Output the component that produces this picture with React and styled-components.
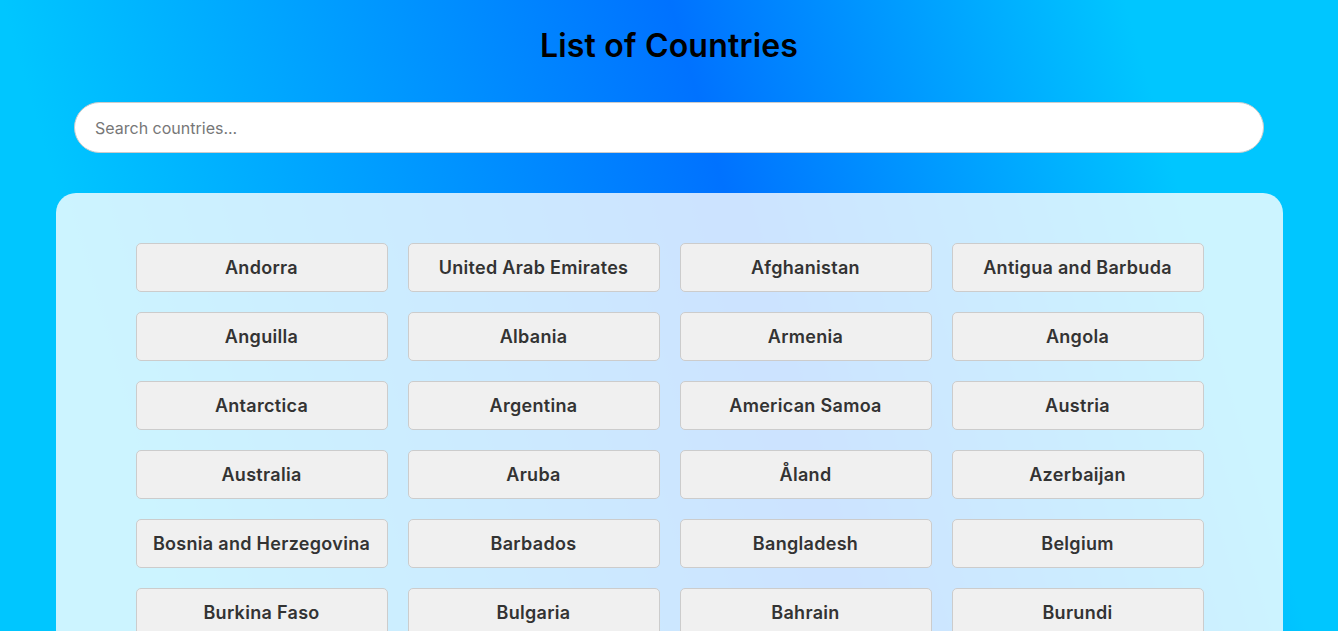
import React, { useState } from 'react'
import styled, { createGlobalStyle } from 'styled-components'

const countries = [
  'Andorra', 'United Arab Emirates', 'Afghanistan', 'Antigua and Barbuda',
  'Anguilla', 'Albania', 'Armenia', 'Angola',
  'Antarctica', 'Argentina', 'American Samoa', 'Austria',
  'Australia', 'Aruba', 'Åland', 'Azerbaijan',
  'Bosnia and Herzegovina', 'Barbados', 'Bangladesh', 'Belgium',
  'Burkina Faso', 'Bulgaria', 'Bahrain', 'Burundi',
  'Benin', 'Saint Barthélemy', 'Bermuda', 'Brunei',
  'Bolivia', 'Bonaire', 'Brazil', 'Bahamas'
]

const GlobalStyle = createGlobalStyle`
  html, body {
    margin: 0;
    padding: 0;
  }
  body {
    font-family: Inter, "Noto Sans", sans-serif;
    background: linear-gradient(74deg, #00c6ff 12%, #0072ff 56%, #00c6ff 86%) fixed;
    min-height: 100vh;
  }
`

const Page = styled.main`
  display: flex;
  flex-direction: column;
  align-items: center;
  padding: 0 0 40px;
`

const Title = styled.h1`
  margin: 22px 0 32px;
  font-size: 32px;
  line-height: 48px;
  font-weight: 600;
  letter-spacing: 0.2px;
  color: #000;
`

const Search = styled.input`
  box-sizing: border-box;
  width: 1190px;
  height: 51px;
  padding: 0 20px;
  border: 1px solid #ccc;
  border-radius: 26px;
  background: #fff;
  font-family: inherit;
  font-size: 16px;
  color: #333;
  outline: none;

  &::placeholder {
    color: #777;
  }
`

const Card = styled.section`
  box-sizing: border-box;
  width: 1227px;
  margin-top: 40px;
  padding: 50px 80px;
  border-radius: 20px;
  background: rgba(255, 255, 255, 0.8);
`

const Grid = styled.ul`
  display: grid;
  grid-template-columns: repeat(4, 252px);
  gap: 20px;
  margin: 0;
  padding: 0;
  list-style: none;
`

const Item = styled.li`
  box-sizing: border-box;
  height: 49px;
  display: flex;
  align-items: center;
  justify-content: center;
  border: 1px solid #ccc;
  border-radius: 5px;
  background: #f0f0f0;
  color: #333;
  font-size: 18px;
  font-weight: 600;
  letter-spacing: 0.3px;
  white-space: nowrap;
`

export default function App() {
  const [query, setQuery] = useState('')
  const shown = countries.filter((c) => c.toLowerCase().includes(query.toLowerCase()))

  return (
    <>
      <GlobalStyle />
      <Page>
        <Title>List of Countries</Title>
        <Search
          placeholder="Search countries..."
          value={query}
          onChange={(e) => setQuery(e.target.value)}
        />
        <Card>
          <Grid>
            {shown.map((c) => (
              <Item key={c}>{c}</Item>
            ))}
          </Grid>
        </Card>
      </Page>
    </>
  )
}
